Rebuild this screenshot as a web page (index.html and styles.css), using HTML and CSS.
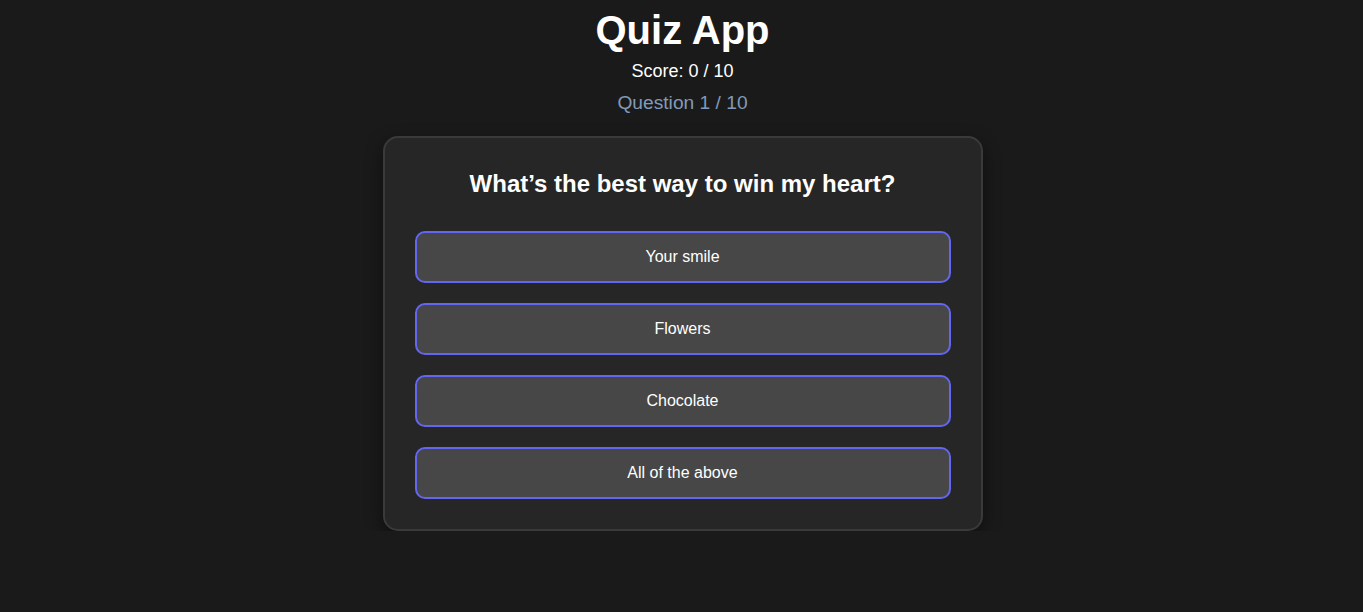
FILE: index.html
```html
<!DOCTYPE html>
<html lang="en">
<head>
<meta charset="utf-8">
<title>Quiz App</title>
<link rel="stylesheet" href="styles.css">
</head>
<body>
<div class="app">
  <h1 class="title">Quiz App</h1>
  <p class="score">Score: 0 / 10</p>
  <p class="progress">Question 1 / 10</p>
  <div class="card">
    <h2 class="question">What’s the best way to win my heart?</h2>
    <div class="options">
      <button class="option">Your smile</button>
      <button class="option">Flowers</button>
      <button class="option">Chocolate</button>
      <button class="option">All of the above</button>
    </div>
  </div>
</div>
</body>
</html>
```
FILE: styles.css
```css
html, body {
  margin: 0;
  padding: 0;
  background: #1a1a1a;
  color: #ffffff;
  font-family: "Liberation Sans", Arial, sans-serif;
}
.app {
  display: flex;
  flex-direction: column;
  align-items: center;
  padding-top: 8px;
  padding-left: 2px;
}
.title {
  margin: 0;
  font-size: 40px;
  line-height: 44px;
  font-weight: 700;
}
.score {
  margin: 8px 0 0;
  font-size: 18px;
  line-height: 22px;
}
.progress {
  margin: 10px 0 0;
  font-size: 19.2px;
  line-height: 22px;
  color: #809bbb;
}
.card {
  margin-top: 22px;
  width: 536px;
  padding: 30px 30px 30px;
  background: #262626;
  border: 2px solid #3a3a3a;
  border-radius: 15px;
  box-shadow: 0 6px 18px rgba(0, 0, 0, 0.45);
}
.question {
  margin: 2px 0 0;
  text-align: center;
  font-size: 24px;
  line-height: 28px;
  font-weight: 700;
}
.options {
  margin-top: 33px;
  display: flex;
  flex-direction: column;
  gap: 20px;
}
.option {
  height: 52px;
  background: #474747;
  border: 2px solid #6366f1;
  border-radius: 10px;
  color: #ffffff;
  font-family: "Liberation Sans", Arial, sans-serif;
  font-size: 16px;
  padding: 0;
}
```
